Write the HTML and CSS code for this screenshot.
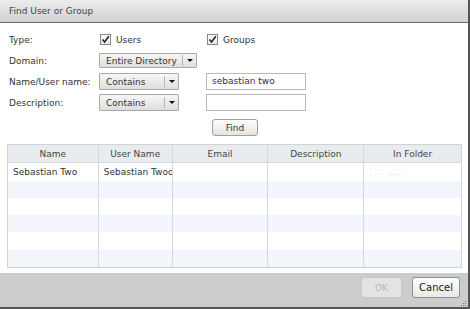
FILE: index.html
```html
<!DOCTYPE html>
<html>
<head>
<meta charset="utf-8">
<link rel="stylesheet" href="styles.css">
</head>
<body>
<div class="dialog">
  <div class="titlebar">Find User or Group</div>
  <div class="content">
    <div class="form">
      <div class="label">Type:</div>
      <label class="check"><span class="box"><svg width="9" height="9" viewBox="0 0 9 9"><path d="M1.5 4.5 L3.6 7 L7.8 1.3" fill="none" stroke="#222" stroke-width="1.6"/></svg></span>Users</label>
      <label class="check"><span class="box"><svg width="9" height="9" viewBox="0 0 9 9"><path d="M1.5 4.5 L3.6 7 L7.8 1.3" fill="none" stroke="#222" stroke-width="1.6"/></svg></span>Groups</label>

      <div class="label">Domain:</div>
      <div class="select wide"><span class="sel-text">Entire Directory</span><span class="sel-arrow"></span></div>
      <div></div>

      <div class="label">Name/User name:</div>
      <div class="select"><span class="sel-text">Contains</span><span class="sel-arrow"></span></div>
      <div class="input">sebastian two</div>

      <div class="label">Description:</div>
      <div class="select"><span class="sel-text">Contains</span><span class="sel-arrow"></span></div>
      <div class="input"></div>

      <div></div>
      <div></div>
      <div class="find-cell"><button class="btn find">Find</button></div>
    </div>

    <div class="table">
      <div class="row head">
        <div class="c c1">Name</div>
        <div class="c c2">User Name</div>
        <div class="c c3">Email</div>
        <div class="c c4">Description</div>
        <div class="c c5">In Folder</div>
      </div>
      <div class="row tall">
        <div class="c c1 l">Sebastian Two</div>
        <div class="c c2 l">Sebastian Twoo</div>
        <div class="c c3"></div>
        <div class="c c4"></div>
        <div class="c c5 blur"><span>·  ·  ·       ·  ·  ·</span><span>·  ·  ·    ·······    ·</span></div>
      </div>
      <div class="row alt"><div class="c c1"></div><div class="c c2"></div><div class="c c3"></div><div class="c c4"></div><div class="c c5"></div></div>
      <div class="row"><div class="c c1"></div><div class="c c2"></div><div class="c c3"></div><div class="c c4"></div><div class="c c5"></div></div>
      <div class="row alt"><div class="c c1"></div><div class="c c2"></div><div class="c c3"></div><div class="c c4"></div><div class="c c5"></div></div>
      <div class="row tall"><div class="c c1"></div><div class="c c2"></div><div class="c c3"></div><div class="c c4"></div><div class="c c5"></div></div>
      <div class="row alt"><div class="c c1"></div><div class="c c2"></div><div class="c c3"></div><div class="c c4"></div><div class="c c5"></div></div>
    </div>
  </div>
  <div class="footer">
    <button class="btn ok" disabled>OK</button>
    <button class="btn cancel">Cancel</button>
    <svg class="grip" width="7" height="7" viewBox="0 0 7 7"><rect x="5" y="1" width="1" height="1" fill="#777"/><rect x="3" y="3" width="1" height="1" fill="#777"/><rect x="5" y="3" width="1" height="1" fill="#777"/><rect x="1" y="5" width="1" height="1" fill="#777"/><rect x="3" y="5" width="1" height="1" fill="#777"/><rect x="5" y="5" width="1" height="1" fill="#777"/></svg>
  </div>
</div>
</body>
</html>
```
FILE: styles.css
```css
html, body {
  margin: 0;
  padding: 0;
  background: #fff;
}
body {
  font-family: "DejaVu Sans", Verdana, sans-serif;
  font-size: 9px;
  color: #333;
}
.dialog {
  width: 468px;
  height: 307px;
  border-right: 2px solid #555;
  border-bottom: 2px solid #555;
  display: flex;
  flex-direction: column;
  background: #fff;
}
.titlebar {
  height: 22px;
  line-height: 22px;
  padding-left: 9px;
  background: linear-gradient(#ececec, #d2d2d2);
  border-bottom: 1px solid #6a6a6a;
  color: #444;
}
.content {
  display: flex;
  flex-direction: column;
}
.form {
  display: grid;
  grid-template-columns: 90px 107px 1fr;
  grid-auto-rows: 17px;
  row-gap: 4px;
  padding: 8px 0 0 9px;
  align-items: center;
}
.label {
  color: #333;
}
.check {
  display: flex;
  align-items: center;
  gap: 5px;
  padding-left: 1px;
}
.box {
  width: 9px;
  height: 9px;
  border: 1px solid #888;
  background: linear-gradient(#fff, #e8e8e8);
  display: flex;
  align-items: center;
  justify-content: center;
}
.select {
  width: 78px;
  height: 15px;
  border: 1px solid #a9a9a9;
  background: linear-gradient(#f7f7f7, #dedede);
  display: flex;
  align-items: center;
  border-radius: 1px;
}
.select.wide {
  width: 96px;
  height: 13px;
}
.sel-text {
  flex: 1;
  padding-left: 6px;
  white-space: nowrap;
  color: #333;
}
.sel-arrow {
  width: 13px;
  height: 11px;
  border-left: 1px solid #b5b5b5;
  position: relative;
}
.sel-arrow::after {
  content: "";
  position: absolute;
  left: 4px;
  top: 4px;
  border-left: 3px solid transparent;
  border-right: 3px solid transparent;
  border-top: 3px solid #111;
}
.input {
  width: 93px;
  height: 15px;
  line-height: 15px;
  border: 1px solid #b9b9b9;
  padding-left: 5px;
  color: #333;
  background: #fff;
}
.find-cell {
  align-self: start;
  margin-top: 4px;
  height: 17px;
}
.btn {
  font-family: "DejaVu Sans", Verdana, sans-serif;
  font-size: 9px;
  color: #333;
  padding: 0;
  border-radius: 3px;
}
.find {
  margin-left: 6px;
  width: 46px;
  height: 17px;
  border: 1px solid #a0a0a0;
  background: linear-gradient(#fdfdfd, #e4e4e4);
  display: block;
}
.table {
  margin: 12px 0 0 7px;
  width: 453px;
  border: 1px solid #d0d4d8;
  display: flex;
  flex-direction: column;
}
.row {
  display: flex;
  height: 17px;
}
.row.tall {
  height: 18px;
}
.row.head {
  height: 17px;
  background: #e8ecef;
  border-bottom: 1px solid #d3d7da;
  color: #444;
}
.row.alt {
  background: #f2f5fa;
}
.c {
  border-right: 1px solid #d6d9dc;
  display: flex;
  align-items: center;
  justify-content: center;
  overflow: hidden;
  white-space: nowrap;
}
.c.l {
  justify-content: flex-start;
  padding-left: 5px;
}
.c1 { width: 90px; }
.c2 { width: 73px; }
.c3 { width: 95px; }
.c4 { width: 95px; }
.c5 { width: 97px; border-right: none; }
.c2.l { width: 68px; }
.c1.l { width: 85px; }
.blur {
  flex-direction: column;
  align-items: flex-start;
  font-size: 5px;
  color: #aaa;
  line-height: 5px;
  padding-left: 6px;
  width: 91px;
  white-space: pre;
}
.footer {
  margin-top: auto;
  height: 34px;
  background: #cccccc;
  display: flex;
  justify-content: flex-end;
  align-items: flex-start;
  padding: 4px 8px 0 0;
  box-sizing: border-box;
  gap: 10px;
  position: relative;
}
.ok {
  width: 41px;
  height: 21px;
  border: 1px solid #c6c6c6;
  background: #e3e3e3;
  color: #b8b8b8;
}
.cancel {
  width: 48px;
  height: 21px;
  border: 1px solid #8f8f8f;
  background: linear-gradient(#fefefe, #e9e9e9);
  color: #222;
  font-size: 10px;
}
.grip {
  position: absolute;
  right: 1px;
  bottom: 0px;
}
```
